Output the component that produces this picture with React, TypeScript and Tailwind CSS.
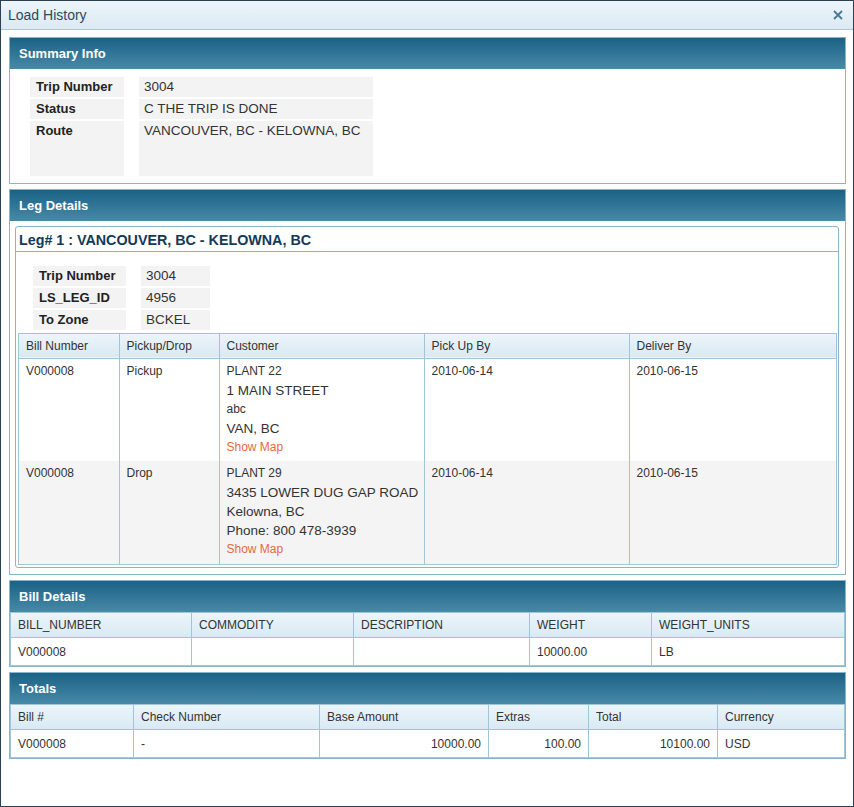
import type { ReactNode } from 'react';

type Row = Record<string, ReactNode>;

function Panel({ title, children }: { title: string; children: ReactNode }) {
  return (
    <div className="border border-[#8ab4c8] bg-white">
      <div className="flex h-[31px] items-center bg-linear-to-b from-[#196286] to-[#4789a7] px-[9px] text-[13px] font-bold text-white">
        {title}
      </div>
      {children}
    </div>
  );
}

function InfoRow({
  label,
  value,
  labelWidth,
  valueWidth,
  tall,
}: {
  label: string;
  value: string;
  labelWidth: string;
  valueWidth: string;
  tall?: boolean;
}) {
  return (
    <div className={`flex gap-[15px] ${tall ? 'h-[55px]' : 'h-[20px]'}`}>
      <div className={`${labelWidth} bg-[#f3f3f3] pl-[6px] text-[13px] leading-[20px] font-bold text-[#222]`}>
        {label}
      </div>
      <div className={`${valueWidth} bg-[#f3f3f3] pl-[5px] text-[13.5px] leading-[20px] text-[#333]`}>{value}</div>
    </div>
  );
}

function Grid({
  columns,
  rows,
  widths,
  right = [],
}: {
  columns: string[];
  rows: Row[];
  widths: string[];
  right?: number[];
}) {
  return (
    <table className="w-full table-fixed border-collapse text-[12px] text-[#333]">
      <colgroup>
        {widths.map((w, i) => (
          <col key={i} className={w} />
        ))}
      </colgroup>
      <thead>
        <tr className="h-[25px] bg-linear-to-b from-[#ecf5fa] to-[#d8e9f3]">
          {columns.map((c) => (
            <th
              key={c}
              className="border border-[#9fc6d8] px-[7px] text-left font-normal whitespace-nowrap"
            >
              {c}
            </th>
          ))}
        </tr>
      </thead>
      <tbody>
        {rows.map((r, ri) => (
          <tr key={ri} className="h-[28px]">
            {columns.map((c, ci) => (
              <td
                key={c}
                className={`border border-[#9fc6d8] px-[7px] ${right.includes(ci) ? 'text-right' : 'text-left'}`}
              >
                {r[c]}
              </td>
            ))}
          </tr>
        ))}
      </tbody>
    </table>
  );
}

const legStops = [
  {
    bill: 'V000008',
    type: 'Pickup',
    name: 'PLANT 22',
    lines: [
      { text: '1 MAIN STREET', big: true },
      { text: 'abc', big: false },
      { text: 'VAN, BC', big: true },
    ],
    pickUp: '2010-06-14',
    deliver: '2010-06-15',
  },
  {
    bill: 'V000008',
    type: 'Drop',
    name: 'PLANT 29',
    lines: [
      { text: '3435 LOWER DUG GAP ROAD', big: true },
      { text: 'Kelowna, BC', big: true },
      { text: 'Phone: 800 478-3939', big: true },
    ],
    pickUp: '2010-06-14',
    deliver: '2010-06-15',
  },
];

export default function App() {
  return (
    <div className="flex h-[807px] w-[854px] flex-col border border-[#2b4152] bg-white font-['Liberation_Sans',Arial,sans-serif]">
      {/* Title bar */}
      <div className="flex h-[29px] shrink-0 items-center justify-between border-b border-[#a9c9d9] bg-linear-to-b from-[#edf5fa] to-[#dbeaf3] pr-[10px] pl-[7px]">
        <span className="text-[14px] text-[#2a4a62]">Load History</span>
        <svg width="10" height="10" viewBox="0 0 10 10" className="text-[#4a7894]">
          <path d="M1 1 L9 9 M9 1 L1 9" stroke="currentColor" strokeWidth="1.8" />
        </svg>
      </div>

      <div className="flex flex-col gap-[5px] pt-[7px] pr-[7px] pl-[8px]">
        {/* Summary */}
        <Panel title="Summary Info">
          <div className="flex flex-col gap-[2px] pt-[8px] pb-[7px] pl-[20px]">
            <InfoRow label="Trip Number" value="3004" labelWidth="w-[94px]" valueWidth="w-[234px]" />
            <InfoRow label="Status" value="C THE TRIP IS DONE" labelWidth="w-[94px]" valueWidth="w-[234px]" />
            <InfoRow
              label="Route"
              value="VANCOUVER, BC - KELOWNA, BC"
              labelWidth="w-[94px]"
              valueWidth="w-[234px]"
              tall
            />
          </div>
        </Panel>

        {/* Leg details */}
        <Panel title="Leg Details">
          <div className="mt-[5px] mr-[6px] mb-[6px] ml-[5px] rounded-[3px] border border-[#8ab4c8]">
            <div className="flex h-[25px] items-center border-b border-[#8ab4c8] pt-[3px] pl-[3px] text-[14.3px] font-bold text-[#123a58]">
              Leg# 1 : VANCOUVER, BC - KELOWNA, BC
            </div>
            <div className="flex flex-col gap-[2px] pt-[14px] pl-[17px]">
              <InfoRow label="Trip Number" value="3004" labelWidth="w-[93px]" valueWidth="w-[69px]" />
              <InfoRow label="LS_LEG_ID" value="4956" labelWidth="w-[93px]" valueWidth="w-[69px]" />
              <InfoRow label="To Zone" value="BCKEL" labelWidth="w-[93px]" valueWidth="w-[69px]" />
            </div>
            <div className="mt-[3px] mr-[1px] mb-[2px] ml-[2px] border border-[#9fc6d8]">
              <table className="w-full table-fixed border-collapse text-[12px] text-[#333]">
                <colgroup>
                  <col className="w-[100px]" />
                  <col className="w-[100px]" />
                  <col className="w-[205px]" />
                  <col className="w-[205px]" />
                  <col />
                </colgroup>
                <thead>
                  <tr className="h-[24px] border-b border-[#9fc6d8] bg-linear-to-b from-[#ecf5fa] to-[#d8e9f3]">
                    {['Bill Number', 'Pickup/Drop', 'Customer', 'Pick Up By', 'Deliver By'].map((c, ci) => (
                      <th
                        key={c}
                        className={`px-[7px] text-left font-normal ${ci > 0 ? 'border-l border-[#9fc6d8]' : ''}`}
                      >
                        {c}
                      </th>
                    ))}
                  </tr>
                </thead>
                <tbody>
                  {legStops.map((s, i) => (
                    <tr key={i} className={`h-[103px] align-top leading-[19px] ${i % 2 ? 'bg-[#f4f4f4]' : 'bg-white'}`}>
                      <td className="px-[7px] pt-[3px]">{s.bill}</td>
                      <td className="border-l border-[#9fc6d8] px-[7px] pt-[3px]">{s.type}</td>
                      <td className="border-l border-[#9fc6d8] px-[7px] pt-[3px] whitespace-nowrap">
                        <div>{s.name}</div>
                        {s.lines.map((l) => (
                          <div key={l.text} className={l.big ? 'text-[13.5px]' : ''}>
                            {l.text}
                          </div>
                        ))}
                        <div className="text-[#e66a3e]">Show Map</div>
                      </td>
                      <td className="border-l border-[#9fc6d8] px-[7px] pt-[3px]">{s.pickUp}</td>
                      <td className="border-l border-[#9fc6d8] px-[7px] pt-[3px]">{s.deliver}</td>
                    </tr>
                  ))}
                </tbody>
              </table>
            </div>
          </div>
        </Panel>

        {/* Bill details */}
        <Panel title="Bill Details">
          <Grid
            columns={['BILL_NUMBER', 'COMMODITY', 'DESCRIPTION', 'WEIGHT', 'WEIGHT_UNITS']}
            widths={['w-[181px]', 'w-[162px]', 'w-[176px]', 'w-[122px]', '']}
            rows={[
              {
                BILL_NUMBER: 'V000008',
                COMMODITY: '',
                DESCRIPTION: '',
                WEIGHT: '10000.00',
                WEIGHT_UNITS: 'LB',
              },
            ]}
          />
        </Panel>

        {/* Totals */}
        <Panel title="Totals">
          <Grid
            columns={['Bill #', 'Check Number', 'Base Amount', 'Extras', 'Total', 'Currency']}
            widths={['w-[123px]', 'w-[186px]', 'w-[169px]', 'w-[100px]', 'w-[129px]', '']}
            right={[2, 3, 4]}
            rows={[
              {
                'Bill #': 'V000008',
                'Check Number': '-',
                'Base Amount': '10000.00',
                Extras: '100.00',
                Total: '10100.00',
                Currency: 'USD',
              },
            ]}
          />
        </Panel>
      </div>
    </div>
  );
}
